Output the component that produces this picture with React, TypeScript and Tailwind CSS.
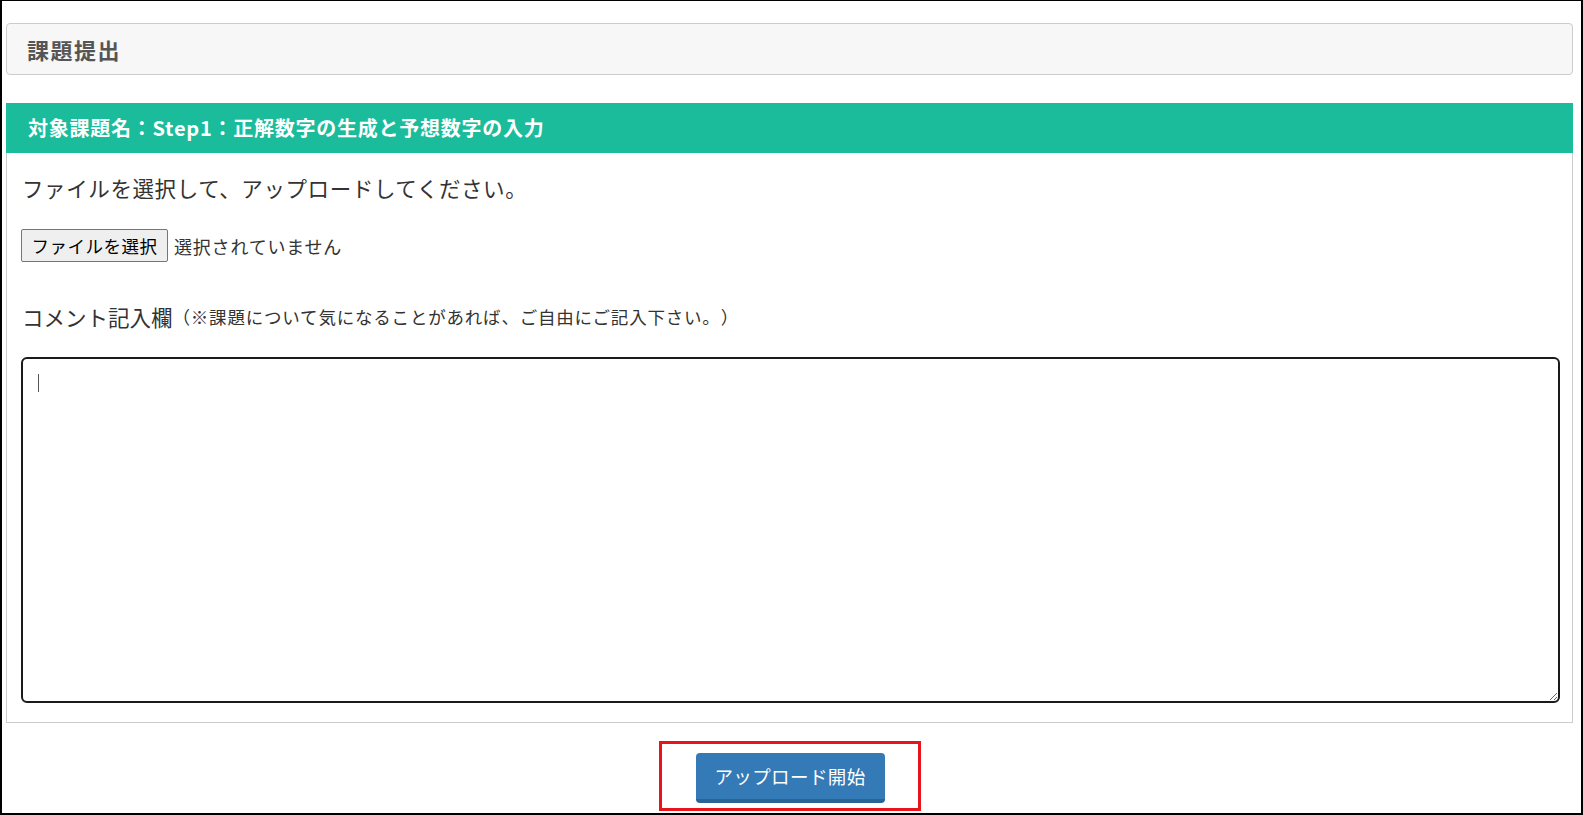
import React from "react";

const jp = { fontFamily: '"Noto Sans CJK JP", "Noto Sans", sans-serif' };

export default function App() {
  return (
    <div
      className="w-full h-[815px] border-black border-l-2 border-t border-r-2 border-b-2 bg-white box-border overflow-hidden"
      style={jp}
    >
      <div className="ml-[4px] mr-[8px] pt-[22px]">
        {/* Header */}
        <div className="h-[52px] rounded-[4px] border border-[#cccccc] bg-[#f7f7f7] flex items-center pl-[20px]">
          <span className="text-[22px] font-bold text-[#555555] leading-none tracking-[1.5px]">課題提出</span>
        </div>

        {/* Panel */}
        <div className="mt-[28px]">
          <div className="h-[50px] bg-[#1abc9c] flex items-center pl-[22px]">
            <span className="text-[20px] font-bold text-white leading-none tracking-[0.75px]">
              対象課題名：Step1：正解数字の生成と予想数字の入力
            </span>
          </div>
          <div className="border-x border-b border-[#cccccc] pl-[14px] pr-[12px] pt-[20px] pb-[19px]">
            <p className="text-[21.5px] leading-[30px] text-[#333333] pl-[1px] tracking-[0.6px]">
              ファイルを選択して、アップロードしてください。
            </p>
            <div className="mt-[26px] flex items-center h-[33px]">
              <button className="h-[33px] w-[147px] bg-[#efefef] border border-[#767676] rounded-[2px] text-[17.5px] text-black leading-none tracking-[0.5px]">
                ファイルを選択
              </button>
              <span className="ml-[6px] text-[18px] text-[#333333] leading-none tracking-[0.8px]">選択されていません</span>
            </div>
            <div className="mt-[40px] h-[30px] flex items-center text-[#333333] pl-[1px] [text-spacing-trim:space-all]">
              <span className="text-[21.5px] leading-none">コメント記入欄</span>
              <span className="text-[17.5px] leading-none tracking-[0.8px] [text-spacing-trim:space-all]">（※課題について気になることがあれば、ご自由にご記入下さい。）</span>
            </div>
            <div className="relative mt-[25px]">
              <textarea
                className="block w-full h-[346px] border-2 border-[#1a1a1a] rounded-[6px] bg-white outline-none resize-y"
                defaultValue=""
              />
              <div className="absolute left-[17px] top-[17px] w-px h-[18px] bg-[#555555]" />
            </div>
          </div>
        </div>

        {/* Submit */}
        <div className="flex justify-center mt-[18px]">
          <div className="border-[3px] border-[#e8141c] pl-[34px] pr-[33px] pt-[9px] pb-[5px]">
            <button className="h-[50px] w-[189px] rounded-[4px] bg-[#337ab7] border-b-[4px] border-[#2a6496] text-white text-[18.5px] leading-none tracking-[0.4px]">
              アップロード開始
            </button>
          </div>
        </div>
      </div>
    </div>
  );
}
